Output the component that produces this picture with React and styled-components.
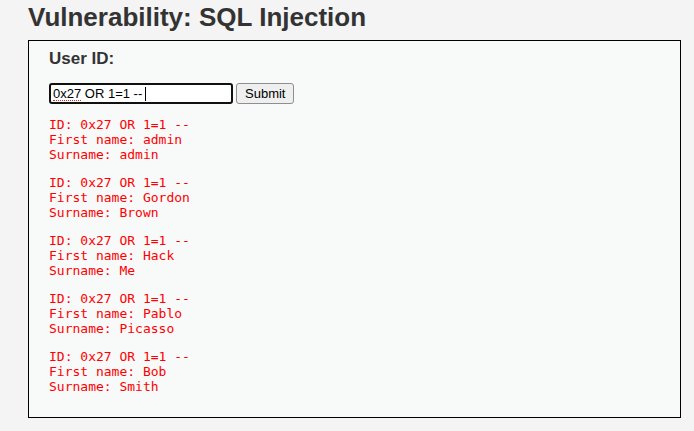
import React from "react";
import styled, { createGlobalStyle } from "styled-components";

const GlobalStyle = createGlobalStyle`
  html, body {
    margin: 0;
    padding: 0;
    background: #f4f4f4;
  }
  body {
    font-family: "Liberation Sans", Arial, sans-serif;
    color: #2f2f2f;
  }
`;

const Page = styled.div`
  width: 694px;
  height: 431px;
  overflow: hidden;
  padding-left: 28px;
  box-sizing: border-box;
`;

const Heading = styled.h1`
  margin: 0;
  height: 40px;
  font-size: 26px;
  line-height: 35px;
  font-weight: bold;
  color: #333333;
`;

const Box = styled.div`
  width: 653px;
  height: 378px;
  box-sizing: border-box;
  border: 1px solid #000000;
  background: #f8f9f9;
  padding: 9px 20px 0;
`;

const Label = styled.div`
  font-size: 17px;
  font-weight: bold;
  line-height: 18px;
  color: #333333;
`;

const FormRow = styled.form`
  display: flex;
  align-items: center;
  gap: 3px;
  margin-top: 15px;
`;

const Field = styled.div`
  position: relative;
  width: 184px;
  height: 21px;
`;

const TextInput = styled.input`
  width: 100%;
  height: 100%;
  box-sizing: border-box;
  border: 2px solid #101010;
  border-radius: 3px;
  padding: 0 2px;
  font-family: "Liberation Sans", Arial, sans-serif;
  font-size: 13px;
  color: #000;
  background: #ffffff;
  outline: none;
`;

/* browser spell-check squiggle and text caret, drawn over the field */
const Squiggle = styled.span`
  position: absolute;
  left: 4px;
  top: 17px;
  width: 28px;
  border-bottom: 1px dotted #e02020;
  pointer-events: none;
`;

const Caret = styled.span`
  position: absolute;
  left: 96px;
  top: 4px;
  width: 1px;
  height: 14px;
  background: #000;
  pointer-events: none;
`;

const Button = styled.button`
  height: 21px;
  box-sizing: border-box;
  padding: 0 8px;
  border: 1px solid #8f8f8f;
  border-radius: 3px;
  background: #efefef;
  font-family: "Liberation Sans", Arial, sans-serif;
  font-size: 13px;
  color: #000;
`;

const Result = styled.pre`
  margin: 13px 0;
  font-family: "DejaVu Sans Mono", monospace;
  font-size: 13px;
  line-height: 15px;
  color: #ff0000;
`;

const users = [
  ["admin", "admin"],
  ["Gordon", "Brown"],
  ["Hack", "Me"],
  ["Pablo", "Picasso"],
  ["Bob", "Smith"],
];

export default function App() {
  return (
    <Page>
      <GlobalStyle />
      <Heading>Vulnerability: SQL Injection</Heading>
      <Box>
        <Label>User ID:</Label>
        <FormRow onSubmit={(e) => e.preventDefault()}>
          <Field>
            <TextInput type="text" defaultValue="0x27 OR 1=1 -- " spellCheck={false} />
            <Squiggle />
            <Caret />
          </Field>
          <Button type="submit">Submit</Button>
        </FormRow>
        {users.map(([first, last]) => (
          <Result key={first}>
            {`ID: 0x27 OR 1=1 --\nFirst name: ${first}\nSurname: ${last}`}
          </Result>
        ))}
      </Box>
    </Page>
  );
}
